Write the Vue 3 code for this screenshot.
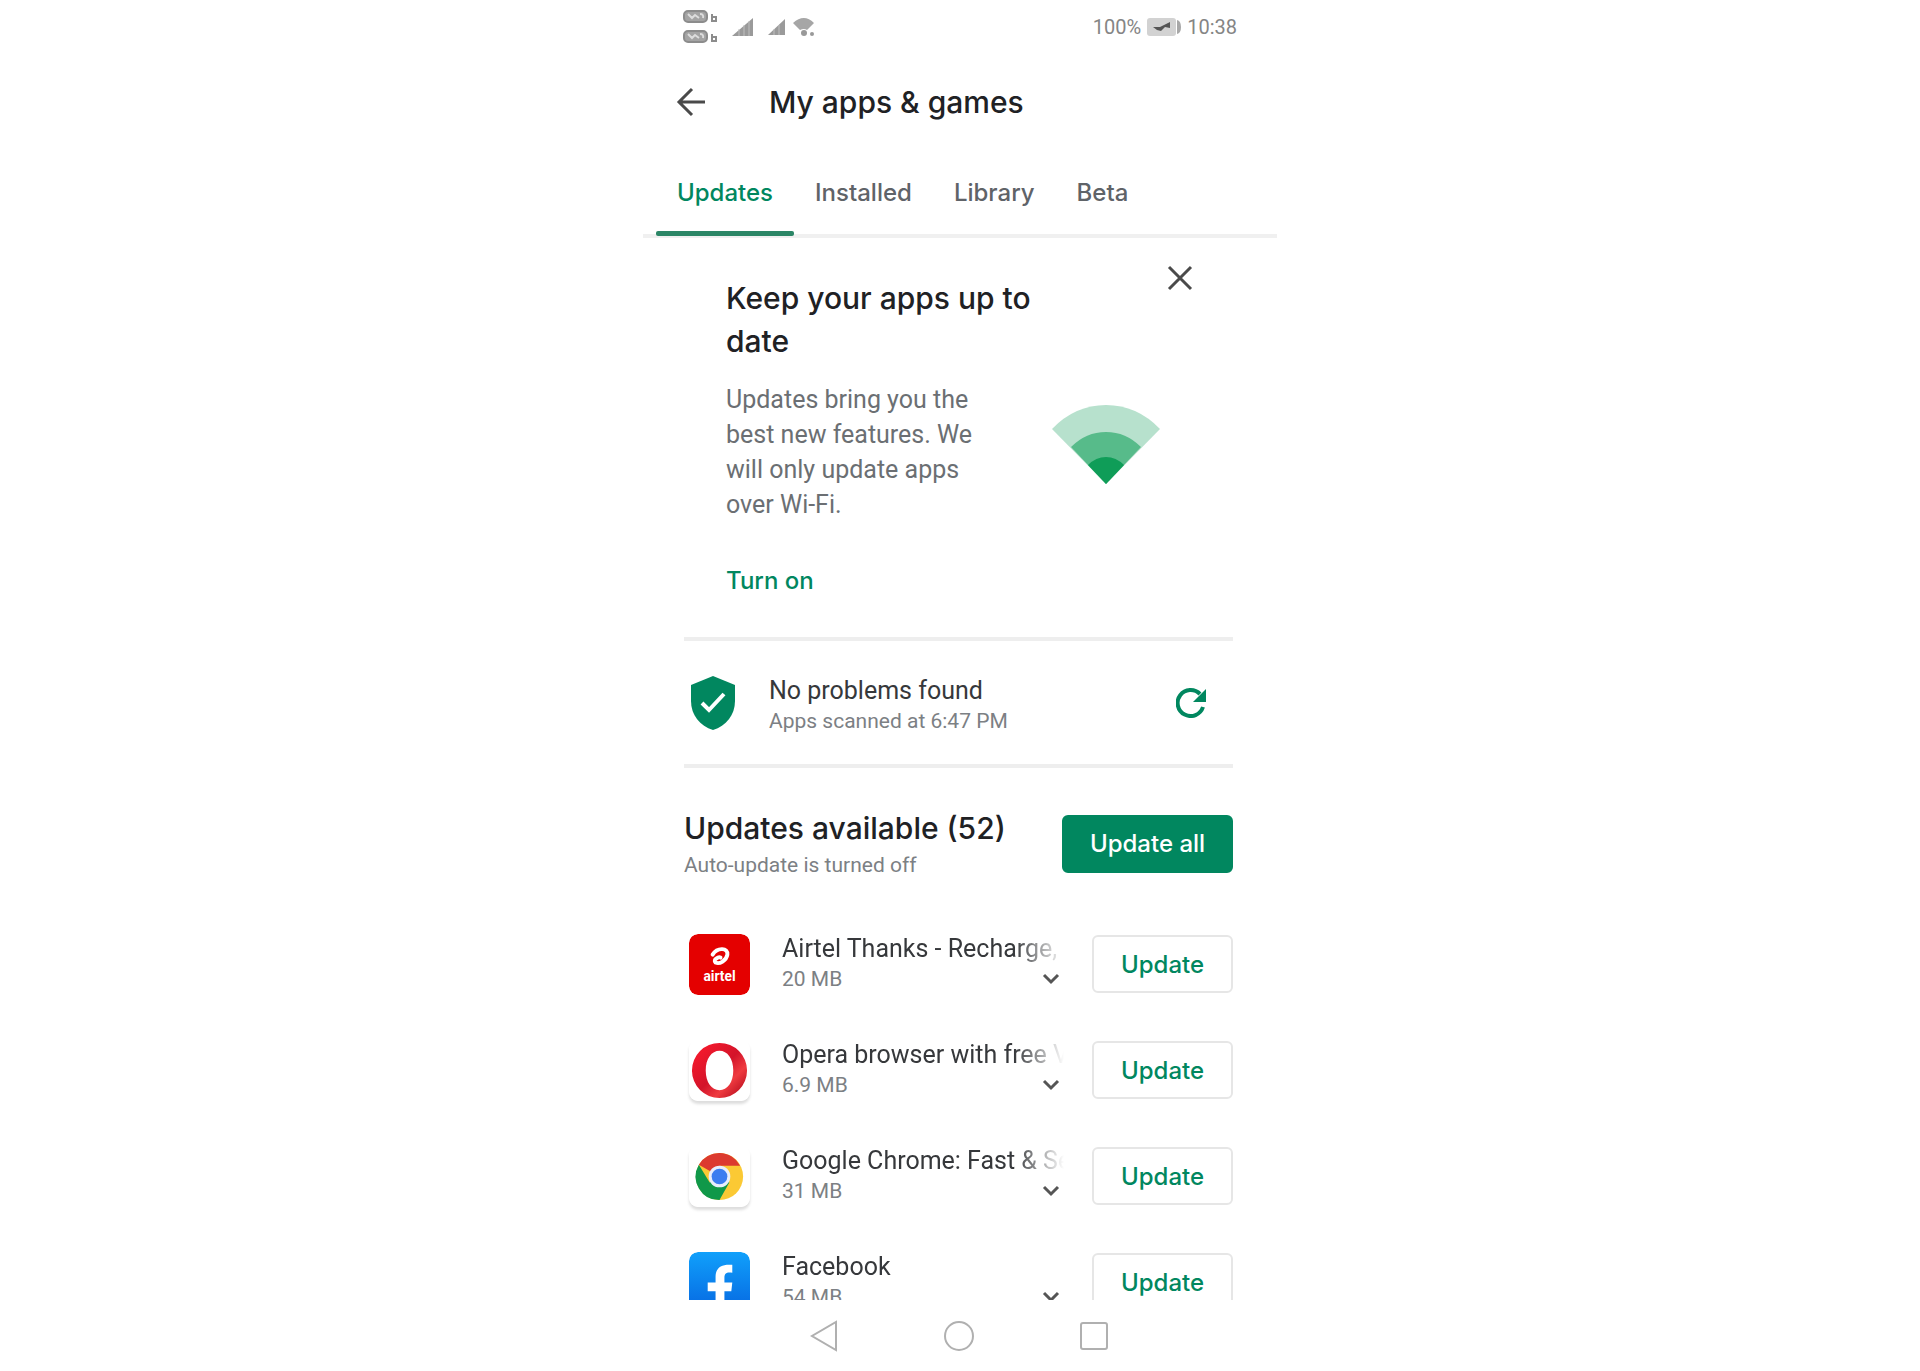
<template>
  <div class="screen">
    <!-- Status bar -->
    <header class="status">
      <div class="status-icons">
        <svg width="36" height="36" viewBox="0 0 36 36" class="volte">
          <g v-for="y in [1, 21]" :key="y">
            <rect x="2" :y="y + 1" width="23" height="11" rx="4" fill="#a4a4a4" stroke="#8c8c8c" stroke-width="2" />
            <path :d="`M6 ${y + 4}l4 4 3-3 4 3M18 ${y + 4}q4 0 3 4`" fill="none" stroke="#ddd" stroke-width="2" />
            <path :d="`M30 ${y + 4}v7h4v-4h-4`" fill="none" stroke="#8c8c8c" stroke-width="2" />
          </g>
        </svg>
        <svg width="22" height="20" viewBox="0 0 22 20" class="signal">
          <path d="M0 19 21 1V19Z" fill="#9a9a9a" />
          <path d="M7 12v7M12 8v11M17 4v15" stroke="#c0c0c0" stroke-width="1" />
        </svg>
        <svg width="18" height="18" viewBox="0 0 18 18" class="signal">
          <path d="M0 17 17 1V17Z" fill="#9a9a9a" />
          <path d="M6 11v6M11 7v10" stroke="#c0c0c0" stroke-width="1" />
        </svg>
        <svg width="24" height="20" viewBox="0 0 24 20" class="wifi-small">
          <path d="M1 6Q12-4 22 6L15 13Q12 11 8 13Z" fill="#a6a6a6" />
          <circle cx="12" cy="16" r="3" fill="#999" />
          <circle cx="20" cy="17" r="2" fill="#999" />
        </svg>
      </div>
      <div class="status-right">
        <span>100%</span>
        <svg width="34" height="18" viewBox="0 0 34 18">
          <rect x="0" y="0" width="29" height="18" rx="3" fill="#d2d2d2" />
          <path d="M30 2q4 1 4 7t-4 7" fill="#a8a8a8" />
          <path d="M6 9h7l4-2 6-3v6l-5-1-4 4-4-1Z" fill="#555" />
        </svg>
        <span>10:38</span>
      </div>
    </header>

    <!-- Title bar -->
    <div class="title-bar">
      <button type="button" class="icon-btn" aria-label="Back">
        <svg width="30" height="30" viewBox="0 0 30 30" fill="none" stroke="#4a4a4a" stroke-width="3">
          <path d="M29 15H3M16 2 3 15l13 13" />
        </svg>
      </button>
      <h1>My apps &amp; games</h1>
    </div>

    <nav class="tabs">
      <button v-for="tab in tabs" :key="tab" type="button" class="tab" :class="{ active: tab === activeTab }" @click="activeTab = tab">{{ tab }}</button>
    </nav>

    <main class="content">
      <!-- Auto update tip -->
      <section v-if="showTip" class="tip">
        <div class="tip-text">
          <h2>Keep your apps up to date</h2>
          <p>Updates bring you the best new features. We will only update apps over Wi-Fi.</p>
          <button type="button" class="link-btn">Turn on</button>
        </div>
        <div class="tip-side">
          <button type="button" class="icon-btn close" aria-label="Close" @click="showTip = false">
            <svg width="26" height="26" viewBox="0 0 26 26" fill="none" stroke="#4a4a4a" stroke-width="3">
              <path d="M2 2l22 22M24 2 2 24" />
            </svg>
          </button>
          <svg class="wifi" width="108" height="80" viewBox="0 0 108 80">
            <path d="M54 80 0 25Q23 1 54 1T108 25Z" fill="#b7e1cd" />
            <path d="M54 80 19 43Q34 28 54 28T89 43Z" fill="#57bb8a" />
            <path d="M54 80 36 61Q44 53 54 53T72 61Z" fill="#0f9d58" />
          </svg>
        </div>
      </section>

      <!-- Play Protect -->
      <section class="protect">
        <svg width="44" height="54" viewBox="0 0 44 54">
          <path d="M22 0 44 9V25C44 39 35 50 22 54C9 50 0 39 0 25V9Z" fill="#01875f" />
          <path d="M11 27l7 7 15-16" fill="none" stroke="#fff" stroke-width="4" />
        </svg>
        <div class="protect-text">
          <div class="name">No problems found</div>
          <div class="sub">Apps scanned at 6:47 PM</div>
        </div>
        <button type="button" class="icon-btn" aria-label="Scan again">
          <svg width="30" height="30" viewBox="0 0 30 30">
            <path d="M27 19A13 13 0 1 1 24 6" fill="none" stroke="#01875f" stroke-width="4" />
            <path d="M30 1V14H17Z" fill="#01875f" />
          </svg>
        </button>
      </section>

      <section class="summary">
        <div>
          <h2>Updates available (52)</h2>
          <div class="sub">Auto-update is turned off</div>
        </div>
        <button type="button" class="btn btn-primary">Update all</button>
      </section>

      <!-- App list -->
      <ul class="apps">
        <li v-for="app in apps" :key="app.id" class="app">
          <svg v-if="app.id === 'airtel'" class="app-icon" viewBox="0 0 62 62">
            <rect width="62" height="62" rx="9" fill="#e40000" />
            <path d="M24 21C29 13 40 14 39 21C38 27 31 31 27 29C24 26 30 23 32 24" fill="none" stroke="#fff" stroke-width="4" stroke-linecap="round" />
            <text x="31" y="48" text-anchor="middle" font-size="14" font-weight="700" fill="#fff">airtel</text>
          </svg>
          <svg v-else-if="app.id === 'opera'" class="app-icon shadow" viewBox="0 0 62 62">
            <defs>
              <linearGradient id="operaRing" x1="0" y1="0" x2="1" y2="1">
                <stop offset="0" stop-color="#ff1b2d" />
                <stop offset="0.5" stop-color="#d3142a" />
                <stop offset="0.7" stop-color="#ef3b40" />
                <stop offset="1" stop-color="#a70014" />
              </linearGradient>
            </defs>
            <rect width="62" height="62" rx="9" fill="#fff" />
            <path fill-rule="evenodd" d="M31 3a28 28 0 1 0 0 56a28 28 0 1 0 0-56ZM31 11c8 0 14 8 14 20s-6 20-14 20s-14-8-14-20s6-20 14-20Z" fill="url(#operaRing)" />
          </svg>
          <svg v-else-if="app.id === 'chrome'" class="app-icon shadow" viewBox="0 0 62 62">
            <rect width="62" height="62" rx="9" fill="#fff" />
            <circle cx="31" cy="31" r="24" fill="#fbc934" />
            <path d="M31 31 10 19A24 24 0 0 1 52 20H31Z" fill="#dc3a2f" />
            <path d="M10 19A24 24 0 0 0 31 55L41 37 31 31 21 37Z" fill="#109849" />
            <circle cx="31" cy="31" r="11" fill="#e8eefb" />
            <circle cx="31" cy="31" r="8" fill="#3b7df0" />
          </svg>
          <svg v-else class="app-icon" viewBox="0 0 62 62">
            <defs>
              <linearGradient id="fbBlue" x1="0" y1="0" x2="0" y2="1">
                <stop offset="0" stop-color="#10a0fb" />
                <stop offset="1" stop-color="#0666e0" />
              </linearGradient>
            </defs>
            <rect width="62" height="62" rx="9" fill="url(#fbBlue)" />
            <path d="M27 62V40H19V31H27V25C27 16 33 12 44 13V21C38 20 36 22 36 26V31H44L43 40H36V62Z" fill="#fff" />
          </svg>

          <div class="app-text">
            <div class="name app-name">{{ app.name }}</div>
            <div class="app-meta">
              <span class="sub">{{ app.size }}</span>
              <button type="button" class="icon-btn" :aria-label="'Details of ' + app.name">
                <svg width="18" height="12" viewBox="0 0 18 12" fill="none" stroke="#555" stroke-width="3">
                  <path d="M2 2l7 7 7-7" />
                </svg>
              </button>
            </div>
          </div>
          <button type="button" class="btn">Update</button>
        </li>
      </ul>
    </main>

    <!-- System navigation -->
    <footer class="sys-nav">
      <button type="button" class="icon-btn" aria-label="System back">
        <svg width="30" height="32" viewBox="0 0 30 32" fill="none" stroke="#b0b0b0" stroke-width="2">
          <path d="M27 2V30L3 16Z" />
        </svg>
      </button>
      <button type="button" class="icon-btn" aria-label="Home">
        <svg width="30" height="32" viewBox="0 0 30 32" fill="none" stroke="#b0b0b0" stroke-width="2">
          <circle cx="15" cy="16" r="14" />
        </svg>
      </button>
      <button type="button" class="icon-btn" aria-label="Recent apps">
        <svg width="30" height="32" viewBox="0 0 30 32" fill="none" stroke="#b0b0b0" stroke-width="2">
          <rect x="2" y="3" width="26" height="26" rx="2" />
        </svg>
      </button>
    </footer>
  </div>
</template>

<script setup>
import { ref } from 'vue';

const tabs = ['Updates', 'Installed', 'Library', 'Beta'];
let activeTab = ref('Updates');
let showTip = ref(true);

const apps = [
  { id: 'airtel', name: 'Airtel Thanks - Recharge, Bill', size: '20 MB' },
  { id: 'opera', name: 'Opera browser with free VPN', size: '6.9 MB' },
  { id: 'chrome', name: 'Google Chrome: Fast & Secure', size: '31 MB' },
  { id: 'facebook', name: 'Facebook', size: '54 MB' },
];
</script>

<style>
body {
  margin: 0;
  background: #fff;
}
</style>

<style scoped>
.screen {
  display: flex;
  flex-direction: column;
  max-width: 634px;
  height: 100vh;
  margin: 0 auto;
  font-family: Roboto, sans-serif;
  color: #202124;
}

button {
  font-family: Inter, sans-serif;
  cursor: pointer;
}

h1,
h2 {
  margin: 0;
  font-family: Inter, sans-serif;
  font-size: 30px;
  font-weight: 500;
  line-height: 43px;
}

svg {
  display: block;
  flex-shrink: 0;
}

.icon-btn {
  padding: 0;
  border: none;
  background: none;
}

.status {
  display: flex;
  align-items: center;
  justify-content: space-between;
  height: 54px;
  padding: 0 40px 0 39px;
  font-size: 20px;
  color: #858585;
}

.status-icons,
.status-right {
  display: flex;
  align-items: center;
}

.status-right {
  gap: 6px;
}

.signal {
  margin-left: 14px;
}

.wifi-small {
  margin-left: 6px;
}

.title-bar {
  display: flex;
  align-items: center;
  gap: 63px;
  height: 96px;
  padding: 0 33px;
}

.tabs {
  display: flex;
  height: 84px;
  padding-left: 13px;
  border-bottom: 4px solid #f0f0f0;
}

.tab {
  position: relative;
  padding: 0 21px;
  border: none;
  background: none;
  font-size: 24px;
  font-weight: 500;
  color: #5f6368;
}

.tab.active {
  color: #01875f;
}

.tab.active::after {
  content: '';
  position: absolute;
  left: 0;
  right: 0;
  bottom: -2px;
  height: 5px;
  border-radius: 2px;
  background: #2b8666;
}

.content {
  flex: 1;
  min-height: 0;
  overflow: hidden;
  padding: 0 44px 0 41px;
}

.tip {
  display: flex;
  padding: 39px 40px 39px 42px;
}

.tip-text {
  flex: 0 1 326px;
}

.tip p {
  max-width: 260px;
  margin: 19px 0 41px;
  font-size: 25px;
  line-height: 35px;
  color: #6b6f73;
}

.link-btn {
  padding: 0;
  border: none;
  background: none;
  font-size: 24px;
  font-weight: 500;
  line-height: 35px;
  color: #01875f;
}

.tip-side {
  display: flex;
  flex: 1;
  flex-direction: column;
}

.close {
  align-self: flex-end;
  margin-top: -12px;
}

.wifi {
  margin-top: 113px;
}

.protect {
  display: flex;
  align-items: center;
  height: 123px;
  padding: 0 27px 0 7px;
  border-top: 4px solid #eee;
  border-bottom: 4px solid #eee;
}

.protect-text {
  flex: 1;
  margin-left: 34px;
  padding-top: 6px;
}

.name {
  font-size: 25px;
  line-height: 30px;
  color: #36383b;
}

.sub {
  font-size: 21px;
  line-height: 30px;
  color: #7c8084;
}

.summary {
  display: flex;
  align-items: center;
  justify-content: space-between;
  margin: 39px 0 31px;
}

.btn {
  flex-shrink: 0;
  width: 141px;
  height: 58px;
  padding: 0;
  border: 2px solid #e6e6e6;
  border-radius: 6px;
  background: #fff;
  font-size: 24px;
  font-weight: 500;
  color: #01875f;
}

.btn-primary {
  width: 171px;
  border-color: #01875f;
  background: #01875f;
  color: #fff;
}

.apps {
  margin: 0;
  padding: 0;
  list-style: none;
}

.app {
  display: flex;
  align-items: center;
  height: 106px;
  padding-left: 5px;
}

.app-icon {
  width: 61px;
  height: 61px;
  border-radius: 9px;
  font-family: Roboto, sans-serif;
}

.shadow {
  box-shadow: 0 3px 3px #ddd;
}

.app-text {
  flex: 1;
  min-width: 0;
  margin: 0 28px 0 32px;
}

.app-name {
  overflow: hidden;
  white-space: nowrap;
  mask-image: linear-gradient(to right, #000 calc(100% - 50px), transparent);
}

.app-meta {
  display: flex;
  align-items: center;
  justify-content: space-between;
  padding-right: 4px;
}

.sys-nav {
  display: flex;
  align-items: center;
  justify-content: center;
  gap: 105px;
  height: 71px;
  padding-right: 3px;
}
</style>
